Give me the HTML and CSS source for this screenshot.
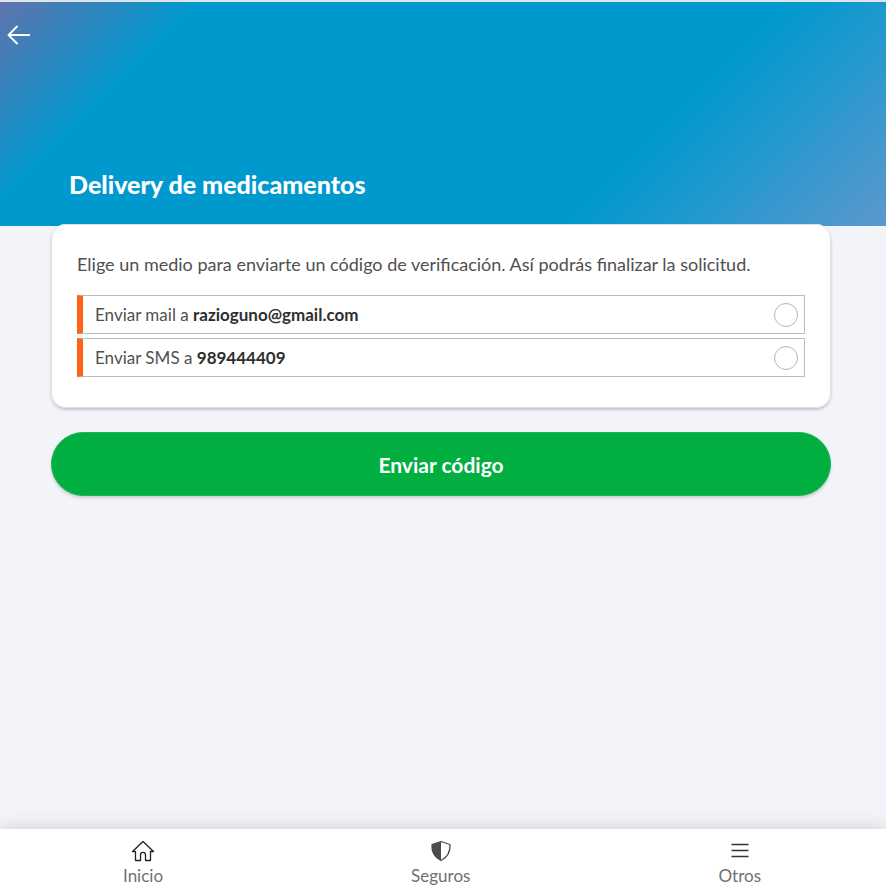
FILE: index.html
```html
<!DOCTYPE html>
<html lang="es">
<head>
<meta charset="utf-8">
<meta name="viewport" content="width=device-width, initial-scale=1">
<title>Delivery de medicamentos</title>
<link rel="stylesheet" href="styles.css">
</head>
<body>
<header class="hero">
  <a class="back" href="#" aria-label="Volver">
    <svg width="24" height="20" viewBox="0 0 24 20" fill="none" stroke="currentColor" stroke-width="1.8" stroke-linecap="round" stroke-linejoin="round"><path d="M22.200 10H1.500M10 1.500L1.500 10l8.500 8.500"/></svg>
  </a>
  <h1 class="title">Delivery de medicamentos</h1>
</header>
<main class="content">
  <form class="form">
    <fieldset class="card">
      <p class="intro">Elige un medio para enviarte un código de verificación. Así podrás finalizar la solicitud.</p>
      <label class="option"><span>Enviar mail a <strong>razioguno@gmail.com</strong></span><input class="radio" type="radio" name="medio" value="mail"></label>
      <label class="option"><span>Enviar SMS a <strong>989444409</strong></span><input class="radio" type="radio" name="medio" value="sms"></label>
    </fieldset>
    <button class="submit" type="submit">Enviar código</button>
  </form>
</main>
<nav class="tabs">
  <a class="tab" href="#">
    <svg width="24" height="24" viewBox="0 0 24 24" fill="none" stroke="#222" stroke-width="1.3" stroke-linejoin="round"><path d="M12 2.500L1.500 12.500H4.500V21.500H9.500V16c0-3.500 5-3.500 5 0v5.500H19.500V12.500h3z"/></svg>
    <span>Inicio</span>
  </a>
  <a class="tab" href="#">
    <svg width="24" height="24" viewBox="0 0 24 24"><path d="M12 2.500L21 5.500C21.500 13 19 18 12 21.500C5 18 2.500 13 3 5.500z" fill="none" stroke="#4c4c4c" stroke-width="1.300" stroke-linejoin="round"/><path d="M12 2.500V21.500C5 18 2.500 13 3 5.500z" fill="#4c4c4c"/></svg>
    <span>Seguros</span>
  </a>
  <a class="tab" href="#">
    <svg width="24" height="24" viewBox="0 0 24 24" stroke="#333" stroke-width="1.300"><path d="M3.500 5.500h17M3.500 11.500h17M3.500 17.500h17"/></svg>
    <span>Otros</span>
  </a>
</nav>
</body>
</html>
```
FILE: styles.css
```css
* { box-sizing: border-box; }
body {
  margin: 0;
  min-height: 100vh;
  display: flex;
  flex-direction: column;
  background: #f3f4fa;
  color: #505050;
  font-family: Lato, "Noto Sans", sans-serif;
  font-size: 17px;
}
.hero {
  height: 226px;
  border-top: 2px solid #dfe6ea;
  padding: 23px 8px 26px 7px;
  display: flex;
  flex-direction: column;
  justify-content: space-between;
  background: linear-gradient(135deg, #6072ac 0%, #0099ce 18%, #0099ce 71%, #5c98ce 100%);
  color: #fff;
}
.back { color: inherit; display: flex; align-self: flex-start; }
.title {
  margin: 0 62px;
  font-size: 25px;
  line-height: 32px;
  font-weight: 900;
}
.content { flex: 1; padding: 0 55px 24px 51px; }
.form { margin-top: -2px; }
.card {
  margin: 0;
  min-width: 0;
  border: 1px solid #e0e0e4;
  border-radius: 15px;
  padding: 26px 25px 30px;
  background: #fff;
  box-shadow: 0 2px 3px rgba(0, 0, 0, .2);
}
.intro { margin: 0 0 18px; font-size: 18px; line-height: 26px; }
.option {
  height: 39px;
  display: flex;
  align-items: center;
  justify-content: space-between;
  border: 1px solid #bdbdbd;
  border-left: 6px solid #ff6319;
  padding: 0 6px 0 12px;
  line-height: 24px;
}
.option + .option { margin-top: 4px; }
.option strong { color: #2e2e2e; }
.radio {
  appearance: none;
  width: 24px;
  height: 24px;
  margin: 0;
  border: 1px solid #b5b5b5;
  border-radius: 50%;
  background: #fff;
}
.radio:checked { border: 7px solid #ff6319; }
.submit {
  display: block;
  width: 100%;
  height: 64px;
  margin-top: 24px;
  padding: 0;
  border: 1px solid #20b454;
  border-radius: 32px;
  background: #00af3f;
  box-shadow: 0 2px 3px rgba(0, 0, 0, .16);
  color: #fff;
  font: inherit;
  font-size: 21px;
  font-weight: 700;
  cursor: pointer;
}
.tabs {
  display: flex;
  justify-content: space-between;
  padding: 10px 125px 6px 123px;
  background: #fff;
  box-shadow: 0 0 18px rgba(0, 0, 0, .16);
}
.tab {
  display: flex;
  flex-direction: column;
  align-items: center;
  gap: 1px;
  color: #707070;
  font-size: 17px;
  line-height: 24px;
  text-decoration: none;
}
```
